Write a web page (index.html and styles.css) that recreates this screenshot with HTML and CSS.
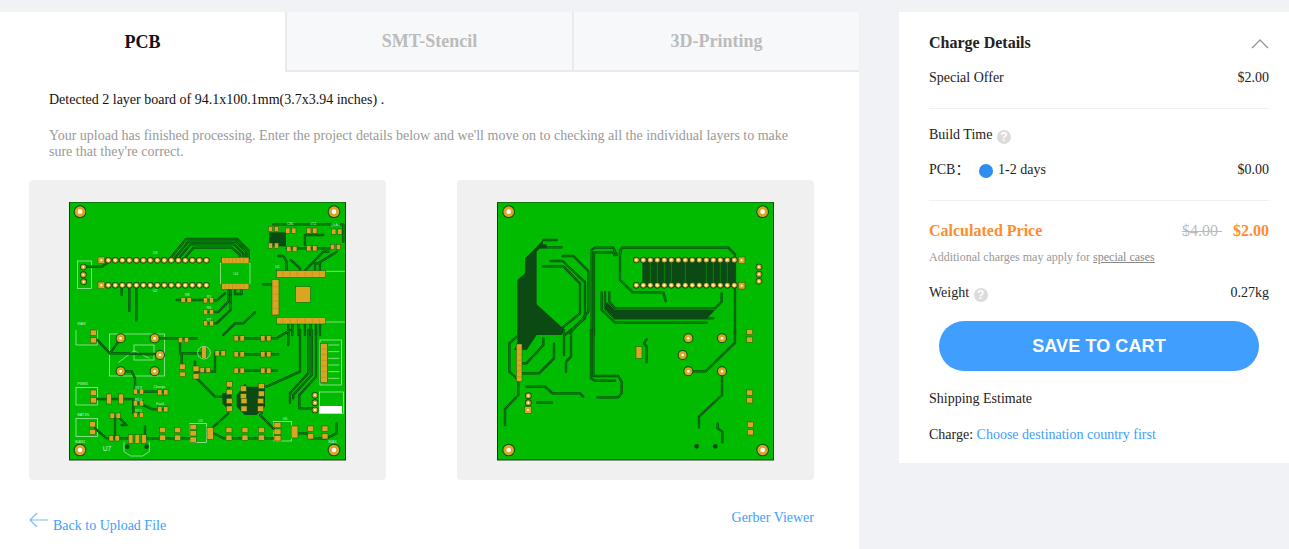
FILE: index.html
```html
<!DOCTYPE html>
<html lang="en">
  <head>
    <meta charset="UTF-8" />
    <meta name="viewport" content="width=device-width, initial-scale=1.0" />
    <title>PCB Quote</title>
    <link rel="stylesheet" href="styles.css">
  </head>
  <body>
    <div class="page">
      <div class="main">
        <div class="tabs">
          <div class="tab active">PCB</div>
          <div class="tab">SMT-Stencil</div>
          <div class="tab">3D-Printing</div>
        </div>
        <p class="detected">Detected 2 layer board of 94.1x100.1mm(3.7x3.94 inches) .</p>
        <p class="notice">Your upload has finished processing. Enter the project details below and we'll move on to checking all the individual layers to make sure that they're correct.</p>

        <div class="previews">
          <div class="preview">
            <svg class="board" width="277" height="259" viewBox="0 0 277 259">
              <defs>
                <g id="hole"><circle r="19" class="dark"/><circle r="16" class="gold"/><circle r="7" class="white"/></g>
                <g id="hole-sm"><circle r="15" class="dark"/><circle r="12" class="gold"/><circle r="4" class="white"/></g>
                <g id="via"><circle r="10" class="dark"/><circle r="7.5" class="gold"/><circle r="3" class="white"/></g>
                <g id="pin"><circle r="10" class="dark"/><circle r="7.5" class="gold"/><circle r="4" class="cream"/></g>
                <g id="sq"><rect x="-10" y="-10" width="20" height="20" class="pad"/><circle r="3" class="white"/></g>
                <g id="cv"><rect x="-9" y="-20" width="18" height="16" class="pad"/><rect x="-9" y="3" width="18" height="16" class="pad"/></g>
                <g id="ch"><rect x="-15" y="-8" width="13" height="16" class="pad"/><rect x="3" y="-8" width="13" height="16" class="pad"/></g>
                <g id="pin-row">
                  <use href="#pin" x="0"/><use href="#pin" x="21"/><use href="#pin" x="42"/><use href="#pin" x="63"/><use href="#pin" x="84"/>
                  <use href="#pin" x="105"/><use href="#pin" x="126"/><use href="#pin" x="147"/><use href="#pin" x="168"/><use href="#pin" x="189"/>
                  <use href="#pin" x="210"/><use href="#pin" x="231"/><use href="#pin" x="252"/><use href="#pin" x="273"/><use href="#pin" x="294"/>
                </g>

                <g id="a-top-traces">
                  <path d="M332 188 L378 132 H532 L566 166 V190"/>
                  <path d="M345 188 L385 140 H528 L558 170 V190"/>
                  <path d="M358 188 L392 148 H522 L550 176 V190"/>
                  <path d="M375 188 L400 158 H515 L540 180 V190"/>
                  <path d="M124 196 H145 M124 271 H145 M140 205 L125 215 H72"/>
                  <path d="M185 271 V300 M208 271 V348 M229 271 V377"/>
                  <path d="M350 315 H440"/>
                  <path d="M445 316 H470 L495 295 M445 351 H475 L505 320 V285 M445 385 H470 L512 345 V285"/>
                  <path d="M490 420 L525 385 H550 L585 352"/>
                  <path d="M525 285 V297 H545 V285"/>
                  <path d="M610 268 H640"/>
                  <path d="M640 88 H850 V140"/>
                  <path d="M655 183 H670 L680 200 V227 M692 195 L720 220 V227 M735 227 L790 170 H805"/>
                  <path d="M765 227 V205 H780 V227 M775 205 L830 170"/>
                  <path d="M680 160 H810 M735 120 H790 M735 120 V150"/>
                  <path d="M685 387 V420 M697 387 V420 M715 387 V420 M735 387 V420 M752 387 V420 M768 387 V420 M780 387 V420"/>
                </g>
                <g id="a-bot-traces">
                  <path d="M112 30 L150 70 H190 L240 72 H300"/>
                  <path d="M200 124 H215 L225 145 V190"/>
                  <path d="M284 25 H410 M360 30 V70 H430"/>
                  <path d="M182 25 L150 70"/>
                  <path d="M480 70 H465 V125 H405 M365 70 V110"/>
                  <path d="M405 95 V140 L465 200 H490 L505 185 V165"/>
                  <path d="M537 25 H615 M615 25 H650 L690 0 M685 0 V45"/>
                  <path d="M537 73 H655 M537 122 H650"/>
                  <path d="M745 0 V130 L690 190 V218 M755 0 V135 L700 195 V205 M768 0 V140 L718 195 V235 H760"/>
                  <path d="M720 0 V125 L620 170 H600"/>
                  <path d="M110 207 H220 V250 H235 M225 165 V190"/>
                  <path d="M235 185 H308 M235 220 L280 238 H308 M225 218 H235"/>
                  <path d="M105 295 L140 325 H165 M165 265 V320 M180 265 L200 285 H185"/>
                  <path d="M170 325 H205 M260 325 H310 M255 290 V325"/>
                  <path d="M310 325 H400"/>
                  <path d="M460 310 L490 325 H650 M505 250 L450 300 M600 255 L645 300"/>
                  <path d="M715 310 H740 L755 325 H800 L830 310 V280"/>
                  <path d="M505 165 V225 M555 165 V250 M605 165 V250"/>
                </g>
                <g id="b-top-traces">
                  <path d="M218 183 H250 L295 228 V350 L240 415"/>
                  <path d="M182 198 H218 L285 262 V370 L225 420"/>
                  <path d="M158 214 H220 L270 265 V355 L215 400"/>
                  <path d="M160 135 H200 M150 157 H215"/>
                  <path d="M305 420 V165 L315 158 H370 L380 180 H372 V165"/>
                  <path d="M312 420 V172 H365"/>
                  <path d="M390 178 L395 158 H715 L735 178 V420"/>
                  <path d="M390 165 V255 L428 292 H520 L527 318"/>
                  <path d="M335 292 V345 L375 383 H650"/>
                  <path d="M345 292 V340 L375 370 H670"/>
                  <path d="M358 292 V320 L375 340 H675 L695 320 V295"/>
                </g>
                <g id="b-bot-traces">
                  <path d="M80 20 L58 40 V125 L85 150 V195 L45 237 V285"/>
                  <path d="M160 25 V45 L110 100 H90 M192 42 V85 L147 130 H90"/>
                  <path d="M222 0 V75 M243 0 V80 L228 95 V125"/>
                  <path d="M110 170 H165 L188 190 H270 L280 200 M142 218 H185"/>
                  <path d="M303 0 V145 L315 152 H375"/>
                  <path d="M310 0 V138 H385 L395 155 V190 L385 202 H322"/>
                  <path d="M470 28 L462 40 L470 50 V97"/>
                  <path d="M595 124 H647 L735 38 V0"/>
                  <path d="M696 124 V195 L627 260 V292"/>
                  <path d="M683 280 V295 L697 305 V337"/>
                </g>
              </defs>

              <rect class="copper" x="0.5" y="0" width="276" height="258"/>
              <g transform="translate(-9,-7) scale(0.3333)">
                <rect class="silk" x="52" y="198" width="42" height="82"/>
                <rect class="silk" x="482" y="205" width="88" height="60"/>
                <path class="silk" d="M797 229 H855 M797 381 H855"/>
                <use href="#a-top-traces" class="trace-outer"/>
                <use href="#a-top-traces" class="trace-inner"/>
                <rect class="dark" x="628" y="112" width="50" height="42"/>
                <use href="#hole" x="60" y="50"/><use href="#hole" x="822" y="50"/>
                <use href="#sq" x="124" y="196"/><use href="#pin-row" x="145" y="196"/>
                <use href="#sq" x="124" y="271"/><use href="#pin-row" x="145" y="271"/>
                <use href="#via" x="70" y="216"/><use href="#via" x="70" y="239"/><use href="#via" x="71" y="260"/>
                <rect class="pad" x="485" y="187" width="82" height="18"/>
                <rect class="pad" x="485" y="265" width="82" height="18"/>
                <path class="pad-lines" d="M496 187 V205 M507 187 V205 M518 187 V205 M529 187 V205 M540 187 V205 M551 187 V205 M496 265 V283 M507 265 V283 M518 265 V283 M529 265 V283 M540 265 V283 M551 265 V283"/>
                <rect class="pad" x="650" y="227" width="147" height="20"/>
                <rect class="pad" x="650" y="367" width="147" height="20"/>
                <rect class="pad" x="636" y="253" width="21" height="107"/>
                <rect class="pad" x="707" y="275" width="44" height="47"/>
                <path class="pad-lines" d="M668 227 V247 M690 227 V247 M712 227 V247 M735 227 V247 M757 227 V247 M778 227 V247 M668 367 V387 M690 367 V387 M712 367 V387 M735 367 V387 M757 367 V387 M778 367 V387 M636 275 H657 M636 297 H657 M636 318 H657 M636 340 H657"/>
                <use href="#ch" x="378" y="315"/><use href="#ch" x="445" y="316"/><use href="#ch" x="445" y="351"/><use href="#ch" x="445" y="385"/>
                <use href="#ch" x="692" y="107"/><use href="#ch" x="755" y="107"/><use href="#ch" x="830" y="110"/>
                <use href="#ch" x="695" y="162"/><use href="#ch" x="755" y="160"/><use href="#ch" x="826" y="156"/>
                <use href="#ch" x="640" y="102"/><use href="#ch" x="640" y="152"/>
                <text class="silk-text" x="278" y="178">U3</text>
                <text class="silk-text" x="278" y="292">U2</text>
                <text class="silk-text" x="520" y="240">U4</text>
                <text class="silk-text" x="645" y="220">U1</text>
                <text class="silk-text" x="680" y="90">C86</text>
                <text class="silk-text" x="750" y="90">V51</text>
                <text class="silk-text" x="812" y="92">Q6A1</text>
                <text class="silk-text" x="375" y="303">R8</text>
                <text class="silk-text" x="440" y="309">R5</text>
                <text class="silk-text" x="440" y="343">R6</text>
                <text class="silk-text" x="440" y="377">R7</text>
                <text class="silk-text" x="52" y="390">RAW</text>
              </g>
              <g transform="translate(-9,128) scale(0.3333)">
                <rect class="silk" x="148" y="12" width="166" height="126"/>
                <rect class="silk" x="222" y="45" width="60" height="45"/>
                <path class="silk" d="M48 0 V45 H112 V0 M222 62 L268 85 M175 98 L222 62"/>
                <rect class="silk" x="780" y="30" width="65" height="135"/>
                <rect class="silk" x="778" y="186" width="72" height="64"/>
                <rect class="white" x="778" y="228" width="68" height="22"/>
                <rect class="silk" x="48" y="172" width="64" height="53"/>
                <rect class="silk" x="48" y="265" width="64" height="55"/>
                <rect class="silk" x="390" y="280" width="50" height="58"/>
                <rect class="silk" x="640" y="275" width="55" height="58"/>
                <path class="silk" d="M192 335 V365 L212 378 H248 L268 365 V335"/>
                <path class="silk" d="M805 45 H838 M805 65 H838 M805 85 H838 M805 105 H838 M805 125 H838 M805 145 H838"/>
                <use href="#a-bot-traces" class="trace-outer"/>
                <use href="#a-bot-traces" class="trace-inner"/>
                <path class="dark" d="M550 170 H590 L615 165 V230 L590 255 H555 L530 230 V195 Z"/>
                <path class="dark" d="M487 190 H515 V235 H500 L487 220 Z"/>
                <use href="#hole" x="60" y="360"/><use href="#hole" x="822" y="360"/>
                <use href="#hole-sm" x="182" y="25"/><use href="#hole-sm" x="284" y="25"/><use href="#hole-sm" x="300" y="75"/><use href="#hole-sm" x="182" y="124"/><use href="#hole-sm" x="284" y="124"/>
                <use href="#cv" x="100" y="20"/>
                <use href="#ch" x="370" y="30"/>
                <rect class="pad" x="425" y="50" width="14" height="35"/>
                <circle class="silk" cx="432" cy="68" r="19"/>
                <use href="#ch" x="480" y="70"/>
                <rect class="pad" x="358" y="102" width="18" height="16"/><rect class="pad" x="358" y="126" width="18" height="14"/>
                <use href="#cv" x="408" y="128"/><use href="#ch" x="435" y="120"/>
                <use href="#ch" x="537" y="25"/><use href="#ch" x="617" y="25"/>
                <use href="#ch" x="537" y="73"/><use href="#ch" x="617" y="73"/>
                <use href="#ch" x="537" y="122"/><use href="#ch" x="617" y="122"/>
                <use href="#cv" x="508" y="175"/><use href="#cv" x="508" y="225"/>
                <use href="#cv" x="550" y="188"/><use href="#cv" x="552" y="225"/>
                <use href="#cv" x="604" y="180"/><use href="#cv" x="602" y="225"/>
                <rect class="pad" x="782" y="40" width="20" height="118"/>
                <path class="pad-lines" d="M782 57 H802 M782 74 H802 M782 91 H802 M782 108 H802 M782 125 H802 M782 142 H802"/>
                <use href="#via" x="765" y="196"/><use href="#via" x="765" y="218"/><use href="#via" x="765" y="240"/>
                <use href="#cv" x="100" y="200"/><use href="#cv" x="97" y="295"/>
                <rect class="pad" x="140" y="192" width="14" height="30"/><rect class="pad" x="176" y="192" width="14" height="30"/>
                <use href="#ch" x="235" y="185"/><use href="#ch" x="235" y="220"/><use href="#ch" x="235" y="255"/>
                <use href="#ch" x="308" y="187"/><use href="#ch" x="308" y="238"/>
                <use href="#ch" x="165" y="257"/><use href="#ch" x="162" y="325"/>
                <rect class="pad" x="205" y="314" width="14" height="26"/><rect class="pad" x="225" y="314" width="14" height="26"/><rect class="pad" x="245" y="314" width="14" height="26"/>
                <circle class="dark" cx="202" cy="350" r="7"/><circle class="dark" cx="260" cy="350" r="7"/>
                <use href="#cv" x="308" y="312"/><use href="#cv" x="353" y="312"/>
                <rect class="pad" x="390" y="283" width="19" height="16"/><rect class="pad" x="390" y="302" width="19" height="16"/><rect class="pad" x="390" y="321" width="19" height="16"/>
                <rect class="pad" x="441" y="292" width="19" height="36"/>
                <use href="#cv" x="507" y="312"/><use href="#cv" x="555" y="312"/><use href="#cv" x="604" y="312"/>
                <rect class="pad" x="642" y="277" width="21" height="16"/><rect class="pad" x="642" y="297" width="21" height="16"/><rect class="pad" x="642" y="317" width="21" height="16"/>
                <rect class="pad" x="695" y="288" width="19" height="36"/>
                <use href="#cv" x="752" y="308"/><use href="#cv" x="795" y="308"/>
                <text class="silk-text" x="52" y="165">PWM1</text>
                <text class="silk-text" x="52" y="259">BAT1N</text>
                <text class="silk-text" x="45" y="338">BIAS1</text>
                <text class="silk-text" x="805" y="338">BIAS</text>
                <text class="silk-text large" x="128" y="362">U7</text>
                <text class="silk-text" x="225" y="176">R13</text>
                <text class="silk-text" x="225" y="212">R14</text>
                <text class="silk-text" x="225" y="246">R15</text>
                <text class="silk-text" x="280" y="175">Charge</text>
                <text class="silk-text" x="288" y="226">Fault</text>
                <text class="silk-text" x="415" y="275">U5</text>
                <text class="silk-text" x="668" y="270">U6</text>
              </g>
            </svg>
          </div>

          <div class="preview">
            <svg class="board" width="277" height="259" viewBox="0 0 277 259">
              <rect class="copper" x="0.5" y="0" width="276" height="258"/>
              <g transform="translate(-7,-7) scale(0.3333)">
                <use href="#b-top-traces" class="trace-outer"/>
                <use href="#b-top-traces" class="trace-inner"/>
                <path class="dark" d="M160 135 L105 190 V235 L82 255 V420 H215 L225 405 L140 328 V170 L150 160 H170 V148 H158 Z"/>
                <path class="dark" d="M345 340 L375 372 H650 L675 345 H375 L350 320 Z"/>
                <rect class="dark" x="457" y="190" width="280" height="86"/>
                <path class="green-lines" d="M481 200 V266 M502 200 V266 M523 200 V266 M544 200 V266 M586 200 V266 M649 200 V266 M670 200 V266 M691 200 V266 M712 200 V266"/>
                <use href="#hole" x="56" y="50"/><use href="#hole" x="818" y="50"/>
                <use href="#pin-row" x="439" y="195"/><use href="#sq" x="755" y="196"/>
                <use href="#pin-row" x="439" y="271"/><use href="#sq" x="755" y="272"/>
                <use href="#via" x="807" y="216"/><use href="#via" x="807" y="238"/><use href="#via" x="807" y="259"/>
              </g>
              <g transform="translate(-7,128) scale(0.3333)">
                <use href="#b-bot-traces" class="trace-outer"/>
                <use href="#b-bot-traces" class="trace-inner"/>
                <path class="dark" d="M82 0 H150 L110 60 H72 L82 45 Z"/>
                <rect class="pad" x="79" y="42" width="17" height="113"/>
                <path class="pad-lines" d="M79 58 H96 M79 74 H96 M79 91 H96 M79 107 H96 M79 123 H96 M79 140 H96"/>
                <use href="#via" x="115" y="197"/><use href="#via" x="115" y="218"/><use href="#sq" x="114" y="240"/>
                <rect class="pad" x="438" y="50" width="18" height="35"/>
                <use href="#hole-sm" x="595" y="25"/><use href="#hole-sm" x="696" y="25"/><use href="#hole-sm" x="578" y="75"/>
                <use href="#hole-sm" x="595" y="124"/><use href="#hole-sm" x="696" y="124"/>
                <use href="#cv" x="779" y="18"/><use href="#cv" x="779" y="200"/><use href="#cv" x="781" y="296"/>
                <circle class="dark" cx="620" cy="349" r="7"/><circle class="dark" cx="676" cy="349" r="7"/>
                <use href="#hole" x="56" y="360"/><use href="#hole" x="818" y="360"/>
              </g>
            </svg>
          </div>
        </div>

        <div class="links">
          <a class="back-link">
            <svg width="20" height="16" viewBox="0 0 20 16"><path d="M8 1 L1 8 L8 15 M1 8 H19"/></svg>
            <span>Back to Upload File</span>
          </a>
          <a class="viewer-link">Gerber Viewer</a>
        </div>
      </div>

      <div class="side">
        <div class="side-head">
          <h3>Charge Details</h3>
          <svg width="18" height="11" viewBox="0 0 18 11"><path d="M1 10 L9 2 L17 10"/></svg>
        </div>
        <div class="row offer"><span>Special Offer</span><span>$2.00</span></div>
        <div class="build">
          <div class="build-title">Build Time <i class="help">?</i></div>
          <div class="row">
            <span class="pcb-option"><span class="pcb-name">PCB：</span><span class="radio"></span>1-2 days</span>
            <span>$0.00</span>
          </div>
        </div>
        <div class="row price">
          <span>Calculated Price</span>
          <span><s>$4.00&nbsp;</s><b>$2.00</b></span>
        </div>
        <p class="extra">Additional charges may apply for <u>special cases</u></p>
        <div class="row weight"><span>Weight <i class="help">?</i></span><span>0.27kg</span></div>
        <button class="save">SAVE TO CART</button>
        <div class="shipping">Shipping Estimate</div>
        <div class="charge">Charge: <a>Choose destination country first</a></div>
      </div>
    </div>
  </body>
</html>
```

FILE: styles.css
```css
html, body {
  height: 100%;
}
body {
  font-family: "Liberation Serif", "Times New Roman", serif;
  font-size: 14px;
  color: #222;
  margin: 0;
  background-color: #f1f2f6;
  overflow: hidden;
}
a {
  color: #409eff;
}
.page {
  display: flex;
  align-items: flex-start;
  padding-top: 12px;
}

/* left column */
.main {
  width: 859px;
  height: 537px;
  background-color: #fff;
  flex-shrink: 0;
}
.tabs {
  display: flex;
  height: 60px;
}
.tab {
  flex: 1;
  display: flex;
  align-items: center;
  justify-content: center;
  font-size: 18px;
  font-weight: bold;
  color: #bbb;
  background-color: #f7f8fa;
  border-left: 2px solid #e8eaed;
  border-bottom: 2px solid #e8eaed;
}
.tab.active {
  color: #111;
  background-color: #fff;
  border: none;
}
.detected {
  margin: 20px 0 0 49px;
  line-height: 16px;
  color: #111;
}
.notice {
  margin: 20px 45px 0 49px;
  line-height: 16px;
  color: #999;
}
.previews {
  display: flex;
  gap: 71px;
  margin: 20px 0 0 29px;
}
.preview {
  width: 357px;
  height: 300px;
  box-sizing: border-box;
  padding-top: 22px;
  display: flex;
  justify-content: center;
  align-items: flex-start;
  background-color: #f0f0f0;
  border-radius: 4px;
}
.links {
  display: flex;
  justify-content: space-between;
  width: 785px;
  margin: 30px 0 0 29px;
}
.back-link {
  display: flex;
  align-items: flex-start;
  padding-top: 2px;
}
.back-link svg {
  fill: none;
  stroke: #7db9f7;
  stroke-width: 1.2;
  margin-right: 4px;
  flex-shrink: 0;
}
.back-link span {
  margin-top: 6px;
}
.viewer-link {
  line-height: 16px;
}

/* board drawing */
.board {
  display: block;
}
.copper {
  fill: #00bb00;
  stroke: #163a16;
  stroke-width: 1;
}
.dark {
  fill: #0c4a14;
}
.gold {
  fill: #daa520;
}
.white {
  fill: #fff;
}
.cream {
  fill: #fff3c4;
}
.pad {
  fill: #daa520;
  stroke: #0c5a14;
  stroke-width: 1.5;
}
.pad-lines {
  fill: none;
  stroke: #b5861a;
  stroke-width: 1.5;
}
.green-lines {
  fill: none;
  stroke: #00a000;
  stroke-width: 2;
}
.trace-outer {
  fill: none;
  stroke: #0c4a14;
  stroke-width: 7;
  stroke-linecap: round;
  stroke-linejoin: round;
}
.trace-inner {
  fill: none;
  stroke: #009400;
  stroke-width: 2.5;
  stroke-linecap: round;
  stroke-linejoin: round;
}
.silk {
  fill: none;
  stroke: #c4f0c4;
  stroke-width: 2;
}
.silk-text {
  font-family: "Liberation Sans", Arial, sans-serif;
  font-size: 11px;
  fill: #c4f0c4;
}
.silk-text.large {
  font-size: 20px;
}

/* right column */
.side {
  width: 340px;
  margin-left: 40px;
  padding: 0 20px 0 30px;
  height: 451px;
  background-color: #fff;
  flex-shrink: 0;
  color: #222;
}
.side-head {
  display: flex;
  justify-content: space-between;
  align-items: center;
  padding-top: 22px;
}
.side-head h3 {
  margin: 0;
  font-size: 16px;
  line-height: 18px;
  color: #222;
}
.side-head svg {
  fill: none;
  stroke: #999;
  stroke-width: 1.4;
  margin: 1px 0 0 0;
}
.row {
  display: flex;
  justify-content: space-between;
  align-items: center;
  line-height: 16px;
}
.offer {
  margin-top: 18px;
  padding-bottom: 22px;
  border-bottom: 1px solid #f0f0f0;
}
.build {
  padding: 18px 0 22px;
  border-bottom: 1px solid #f0f0f0;
}
.build-title {
  height: 16px;
  line-height: 16px;
  margin-bottom: 19px;
}
.help {
  display: inline-block;
  width: 14px;
  height: 14px;
  line-height: 14px;
  border-radius: 50%;
  margin-left: 1px;
  text-align: center;
  vertical-align: -2px;
  background-color: #dcdcdc;
  color: #fff;
  font-family: "Liberation Sans", Arial, sans-serif;
  font-size: 12px;
  font-style: normal;
  font-weight: bold;
}
.pcb-option {
  display: flex;
  align-items: center;
}
.pcb-name {
  width: 50px;
  font-family: "Liberation Serif", "Noto Sans CJK SC", serif;
}
.radio {
  width: 14px;
  height: 14px;
  border-radius: 50%;
  background-color: #2e8ef0;
  margin-right: 5px;
  position: relative;
  top: 1px;
}
.price {
  margin-top: 22px;
  font-size: 16px;
  line-height: 16px;
  font-weight: bold;
  color: #ff8c2e;
}
.price s {
  font-size: 16px;
  font-weight: normal;
  color: #bbb;
  margin-right: 11px;
}
.price b {
  font-size: 16px;
}
.extra {
  margin: 11px 0 0;
  font-size: 12px;
  line-height: 14px;
  color: #999;
}
.extra u {
  color: #888;
}
.weight {
  height: 16px;
  margin-top: 21px;
}
.save {
  display: block;
  width: 320px;
  height: 50px;
  margin: 20px 0 0 10px;
  border: none;
  border-radius: 25px;
  background-color: #409eff;
  color: #fff;
  font-family: "Liberation Sans", Arial, sans-serif;
  font-size: 18px;
  font-weight: bold;
  letter-spacing: 0.1px;
}
.shipping {
  margin-top: 20px;
  line-height: 16px;
}
.charge {
  margin-top: 20px;
  line-height: 16px;
}
```
